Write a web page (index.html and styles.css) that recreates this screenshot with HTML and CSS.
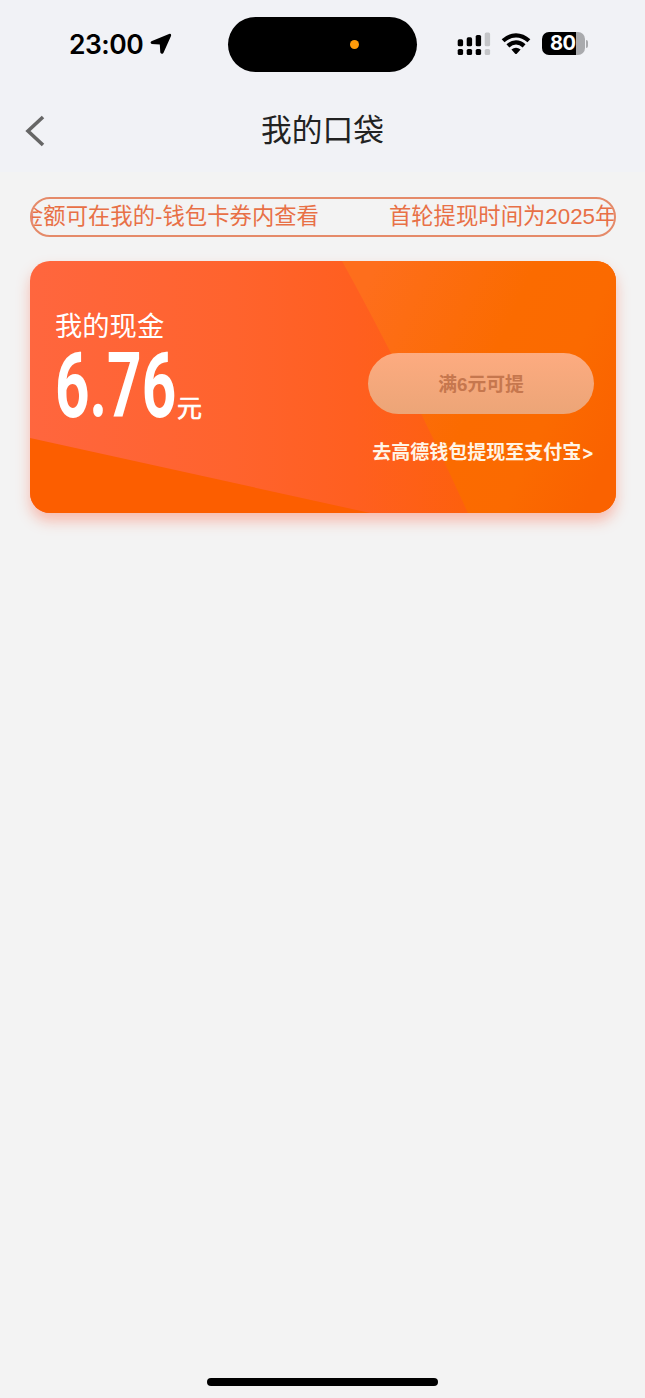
FILE: index.html
```html
<!DOCTYPE html>
<html lang="zh-CN">
<head>
    <meta charset="UTF-8">
    <meta name="viewport" content="width=device-width, initial-scale=1.0">
    <title>我的口袋</title>
    <link rel="stylesheet" href="styles.css">
</head>
<body>
    <div class="page">
        <header class="header">
            <div class="status-bar">
                <div class="status-left">
                    <span class="time">23:00</span>
                    <svg class="location" width="22" height="22" viewBox="0 0 22 22">
                        <path d="M19 .9 1.4 8.2Q-.4 9.7 1.7 10.9L9.8 11.6 10.3 19.6Q11.6 21.9 13.4 20L21 3Q21.6.2 19 .9Z"/>
                    </svg>
                </div>
                <div class="island"><span class="island-dot"></span></div>
                <div class="status-right">
                    <svg class="signal" width="34" height="24" viewBox="0 0 34 24">
                        <rect x="0.7" y="7.3" width="5.4" height="7" rx="1.6"/>
                        <rect x="9.7" y="5.3" width="5.4" height="9" rx="1.6"/>
                        <rect x="18.7" y="3" width="5.4" height="11.3" rx="1.6"/>
                        <rect class="off" x="27.7" y="0.4" width="5.4" height="13.9" rx="1.6"/>
                        <rect x="0.7" y="17" width="5.4" height="6" rx="1.6"/>
                        <rect x="9.7" y="17" width="5.4" height="6" rx="1.6"/>
                        <rect x="18.7" y="17" width="5.4" height="6" rx="1.6"/>
                        <rect class="off" x="27.7" y="17" width="5.4" height="6" rx="1.6"/>
                    </svg>
                    <svg class="wifi" width="30" height="22" viewBox="0 0 30 22">
                        <path class="arc" d="M2.1 7.8Q8 2.3 15 2.3T27.9 7.8"/>
                        <path class="arc" d="M6.9 12.9Q10.6 9.4 15 9.4T23.1 12.9"/>
                        <path d="M10.4 16.6Q15 13 19.6 16.6L15.8 20.7Q15 21.4 14.2 20.7Z"/>
                    </svg>
                    <div class="battery"><span class="battery-level">80</span></div>
                    <span class="battery-cap"></span>
                </div>
            </div>
            <nav class="nav">
                <svg class="back" width="20" height="32" viewBox="0 0 20 32">
                    <path d="M18 2 3 16 18 30"/>
                </svg>
                <h1>我的口袋</h1>
            </nav>
        </header>

        <main class="content">
            <div class="notice">
                <span>金额可在我的-钱包卡券内查看</span>
                <span>首轮提现时间为2025年</span>
            </div>

            <section class="card">
                <svg class="card-bg" width="586" height="252" viewBox="0 0 586 252">
                    <defs>
                        <linearGradient id="base" x1="0" y1="0" x2="1" y2="0">
                            <stop offset="0" stop-color="#ff663e"/>
                            <stop offset="0.35" stop-color="#ff632d"/>
                            <stop offset="0.55" stop-color="#ff5f20"/>
                            <stop offset="0.76" stop-color="#fd600c"/>
                        </linearGradient>
                        <linearGradient id="side" gradientUnits="userSpaceOnUse" x1="320" y1="60" x2="586" y2="180">
                            <stop offset="0" stop-color="#fe6e1c"/>
                            <stop offset="0.5" stop-color="#fb6b00"/>
                            <stop offset="0.75" stop-color="#fb6a00"/>
                            <stop offset="1" stop-color="#fa6200"/>
                        </linearGradient>
                    </defs>
                    <rect width="586" height="252" fill="url(#base)"/>
                    <path d="M312 0H586V252H438Q374 112 312 0Z" fill="url(#side)"/>
                    <path d="M0 177 340 252H0Z" fill="#fc5e00"/>
                </svg>
                <div class="balance">
                    <h2>我的现金</h2>
                    <div class="amount"><span class="number">6.76</span><span class="unit">元</span></div>
                </div>
                <div class="actions">
                    <button class="withdraw" disabled>满6元可提</button>
                    <a class="wallet-link">去高德钱包提现至支付宝&gt;</a>
                </div>
            </section>
        </main>

        <div class="home-bar"></div>
    </div>
</body>
</html>
```

FILE: styles.css
```css
* {
    box-sizing: border-box;
}
body {
    margin: 0;
    background-color: #f3f3f3;
    font-family: "Liberation Sans", "Noto Sans CJK SC", sans-serif;
}
.page {
    display: flex;
    flex-direction: column;
    height: 1398px;
    overflow: hidden;
}
.header {
    height: 172px;
    background-color: #f1f2f6;
}
.status-bar {
    display: grid;
    grid-template-columns: 228px 189px 1fr;
    align-items: center;
    height: 89px;
}
.status-left {
    display: flex;
    align-items: center;
    padding: 0 0 2px 69px;
}
.time {
    width: 75px;
    font-family: Inter, sans-serif;
    font-size: 26.5px;
    font-weight: 600;
    line-height: 32px;
    letter-spacing: -0.5px;
}
.location {
    margin-left: 6px;
}
.island {
    display: flex;
    align-items: center;
    height: 55px;
    padding-left: 122px;
    border-radius: 28px;
    background-color: #000;
}
.island-dot {
    width: 9px;
    height: 9px;
    border-radius: 50%;
    background-color: #ff9b0a;
}
.status-right {
    display: flex;
    align-items: center;
    padding: 0 0 2px 40px;
}
.signal .off {
    fill: #c4c5c8;
}
.wifi {
    margin-left: 10px;
}
.wifi .arc {
    fill: none;
    stroke: #000;
    stroke-width: 4.2;
}
.battery {
    width: 43px;
    height: 23px;
    margin-left: 11px;
    border-radius: 7px;
    background: linear-gradient(to right, #000 34px, #a9aaad 34px);
}
.battery-level {
    display: block;
    padding-left: 8px;
    color: #fff;
    font-family: Inter, sans-serif;
    font-size: 20px;
    font-weight: 700;
    line-height: 23px;
    letter-spacing: -0.4px;
}
.battery-cap {
    width: 2px;
    height: 8px;
    margin-left: 1px;
    border-radius: 0 3px 3px 0;
    background-color: #a9aaad;
}
.nav {
    display: grid;
    grid-template-columns: 1fr auto 1fr;
    align-items: center;
    height: 83px;
    padding: 0 25px;
}
.back path {
    fill: none;
    stroke: #666;
    stroke-width: 3.6;
}
h1 {
    margin: 0;
    color: #222;
    font-size: 30.7px;
    font-weight: 400;
    line-height: 40px;
}
.content {
    padding: 25px 29px 0 30px;
}
.notice {
    display: flex;
    gap: 70px;
    height: 40px;
    border: 2px solid #e58a69;
    border-radius: 20px;
    overflow: hidden;
    color: #e87046;
    font-size: 22.35px;
    line-height: 36px;
    white-space: nowrap;
}
.notice span:first-child {
    margin-left: -11px;
}
.card {
    position: relative;
    display: flex;
    justify-content: space-between;
    height: 252px;
    margin-top: 24px;
    padding: 0 22px 0 25px;
    border-radius: 20px;
    box-shadow: 0 8px 14px rgba(255, 84, 48, 0.35);
    color: #fff;
}
.card-bg {
    position: absolute;
    top: 0;
    left: 0;
    border-radius: 20px;
}
.balance,
.actions {
    position: relative;
}
.balance {
    padding-top: 48px;
}
h2 {
    margin: 0;
    font-size: 27.3px;
    font-weight: 400;
    line-height: 36px;
}
.amount {
    display: flex;
    align-items: baseline;
}
.number {
    width: 122px;
    font-family: Roboto, sans-serif;
    font-size: 90px;
    font-weight: 700;
    line-height: 83px;
    transform: scaleX(0.67);
    transform-origin: left;
}
.unit {
    font-size: 25px;
    line-height: 30px;
    -webkit-text-stroke: 0.6px #fff;
}
.actions {
    display: flex;
    flex-direction: column;
    align-items: flex-end;
    padding-top: 92px;
}
.withdraw {
    width: 226px;
    height: 61px;
    padding: 0 0 2px;
    border: 0;
    border-radius: 31px;
    background: linear-gradient(#fdab80, #eca577);
    color: #c6774e;
    font-family: inherit;
    font-size: 18.8px;
    font-weight: 700;
}
.wallet-link {
    margin-top: 25px;
    color: #fff5e6;
    font-family: Inter, "Noto Sans CJK SC", sans-serif;
    font-size: 19px;
    font-weight: 600;
    line-height: 28px;
    white-space: nowrap;
}
.home-bar {
    width: 231px;
    height: 8px;
    margin: auto auto 12px;
    border-radius: 4px;
    background-color: #000;
}
```
